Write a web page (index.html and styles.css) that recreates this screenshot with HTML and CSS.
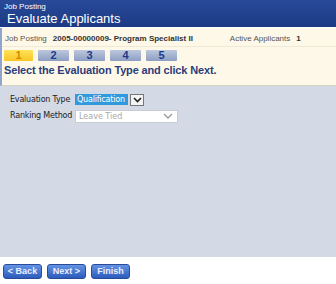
FILE: index.html
```html
<!DOCTYPE html>
<html lang="en">
<head>
    <meta charset="UTF-8">
    <title>Evaluate Applicants</title>
    <link rel="stylesheet" href="styles.css">
</head>
<body>
    <div class="page">
        <div class="header">
            <div class="header-sub">Job Posting</div>
            <div class="header-title">Evaluate Applicants</div>
        </div>
        <div class="info">
            <div class="info-row">
                <span class="lbl">Job Posting</span>
                <span class="val posting">2005-00000009- Program Specialist II</span>
                <span class="lbl">Active Applicants</span>
                <span class="val">1</span>
            </div>
            <div class="steps">
                <div class="step current">1</div>
                <div class="step">2</div>
                <div class="step">3</div>
                <div class="step">4</div>
                <div class="step">5</div>
            </div>
            <div class="instruction">Select the Evaluation Type and click Next.</div>
        </div>
        <div class="form-area">
            <div class="field">
                <label>Evaluation Type</label>
                <div class="select small">
                    <span class="value selected">Qualification</span>
                    <span class="arrow boxed">
                        <svg width="9" height="6" viewBox="0 0 9 6"><path d="M1 1 L4.5 4.5 L8 1" fill="none" stroke="#222" stroke-width="1.6"/></svg>
                    </span>
                </div>
            </div>
            <div class="field">
                <label>Ranking Method</label>
                <div class="select wide disabled">
                    <span class="value">Leave Tied</span>
                    <span class="arrow">
                        <svg width="10" height="6" viewBox="0 0 10 6"><path d="M1 1 L5 5 L9 1" fill="none" stroke="#999" stroke-width="1.3"/></svg>
                    </span>
                </div>
            </div>
        </div>
        <div class="buttons">
            <button class="btn">&lt; Back</button>
            <button class="btn">Next &gt;</button>
            <button class="btn">Finish</button>
        </div>
    </div>
</body>
</html>
```

FILE: styles.css
```css
body {
    margin: 0;
    padding: 0;
    font-family: Tahoma, "DejaVu Sans", sans-serif;
    font-size: 9px;
    background: #fff;
}

.page {
    width: 336px;
    height: 284px;
    display: flex;
    flex-direction: column;
}

.header {
    height: 27px;
    background: linear-gradient(#284a98, #1c3a84);
    color: #fff;
    padding-left: 4px;
    box-sizing: border-box;
}

.header-sub {
    font-family: "Liberation Sans", Arial, sans-serif;
    font-size: 8px;
    padding-top: 2px;
    line-height: 9px;
}

.header-title {
    font-family: "Liberation Sans", Arial, sans-serif;
    font-size: 13px;
    line-height: 15px;
    padding-left: 3px;
}

.info {
    margin-top: 1px;
    height: 57px;
    background: #fdf8e8;
    border-left: 2px solid #8fa4cf;
    border-bottom: 1px solid #d8d2c2;
}

.info-row {
    height: 16px;
    display: flex;
    align-items: center;
    padding-left: 3px;
    padding-top: 2px;
    color: #555;
    font-family: "Liberation Sans", Arial, sans-serif;
    font-size: 8px;
    border-bottom: 1px solid #efe9d6;
}

.lbl {
    margin-right: 6px;
}

.val {
    font-weight: bold;
    color: #333;
}

.posting {
    width: 177px;
}

.steps {
    display: flex;
    gap: 5px;
    padding: 3px 0 0 2px;
}

.step {
    width: 31px;
    height: 11px;
    background: linear-gradient(#bcc8de, #8d9ec2);
    color: #1f3a88;
    font-family: "Liberation Sans", Arial, sans-serif;
    font-weight: bold;
    font-size: 11px;
    line-height: 11px;
    text-align: center;
    border-radius: 1px;
}

.step.current {
    width: 29px;
    background: linear-gradient(#ffe25a, #f8c625);
    color: #d68a00;
}

.instruction {
    font-family: "Liberation Sans", Arial, sans-serif;
    font-weight: bold;
    font-size: 11px;
    color: #2c3d7c;
    padding: 3px 0 0 2px;
    letter-spacing: -0.15px;
}

.form-area {
    flex: 1;
    background: #d3d9e5;
    padding: 6px 0 0 10px;
}

.field {
    display: flex;
    align-items: center;
    height: 15px;
    margin-bottom: 1px;
}

.field label {
    width: 65px;
    font-family: "DejaVu Sans", sans-serif;
    font-size: 8px;
    color: #222;
    letter-spacing: -0.2px;
}

.select {
    display: flex;
    align-items: center;
    height: 12px;
    font-family: "DejaVu Sans", sans-serif;
    font-size: 8px;
}

.select.small .value {
    width: 51px;
    height: 11px;
    padding-left: 2px;
    background: #3399dd;
    color: #fff;
    line-height: 11px;
    letter-spacing: -0.2px;
}

.arrow.boxed {
    margin-left: 2px;
    width: 12px;
    height: 10px;
    border: 1px solid #777;
    background: #f4f4f4;
    display: flex;
    align-items: center;
    justify-content: center;
}

.select.wide {
    width: 101px;
    height: 11px;
    background: #fff;
    border: 1px solid #c9ccd2;
    justify-content: space-between;
    margin-top: 1px;
}

.select.disabled .value {
    color: #a8a8a8;
    padding-left: 3px;
}

.select.wide .arrow {
    margin-right: 4px;
    display: flex;
}

.buttons {
    height: 26px;
    display: flex;
    align-items: center;
    gap: 5px;
    padding-left: 3px;
    padding-top: 1px;
}

.btn {
    height: 15px;
    width: 39px;
    padding: 0;
    border: 1px solid #2a4c98;
    border-radius: 3px;
    background: linear-gradient(#6393e4, #2c5cbc);
    color: #e8eefc;
    font-family: "Liberation Sans", Arial, sans-serif;
    font-size: 9px;
    font-weight: bold;
    line-height: 13px;
}
```
